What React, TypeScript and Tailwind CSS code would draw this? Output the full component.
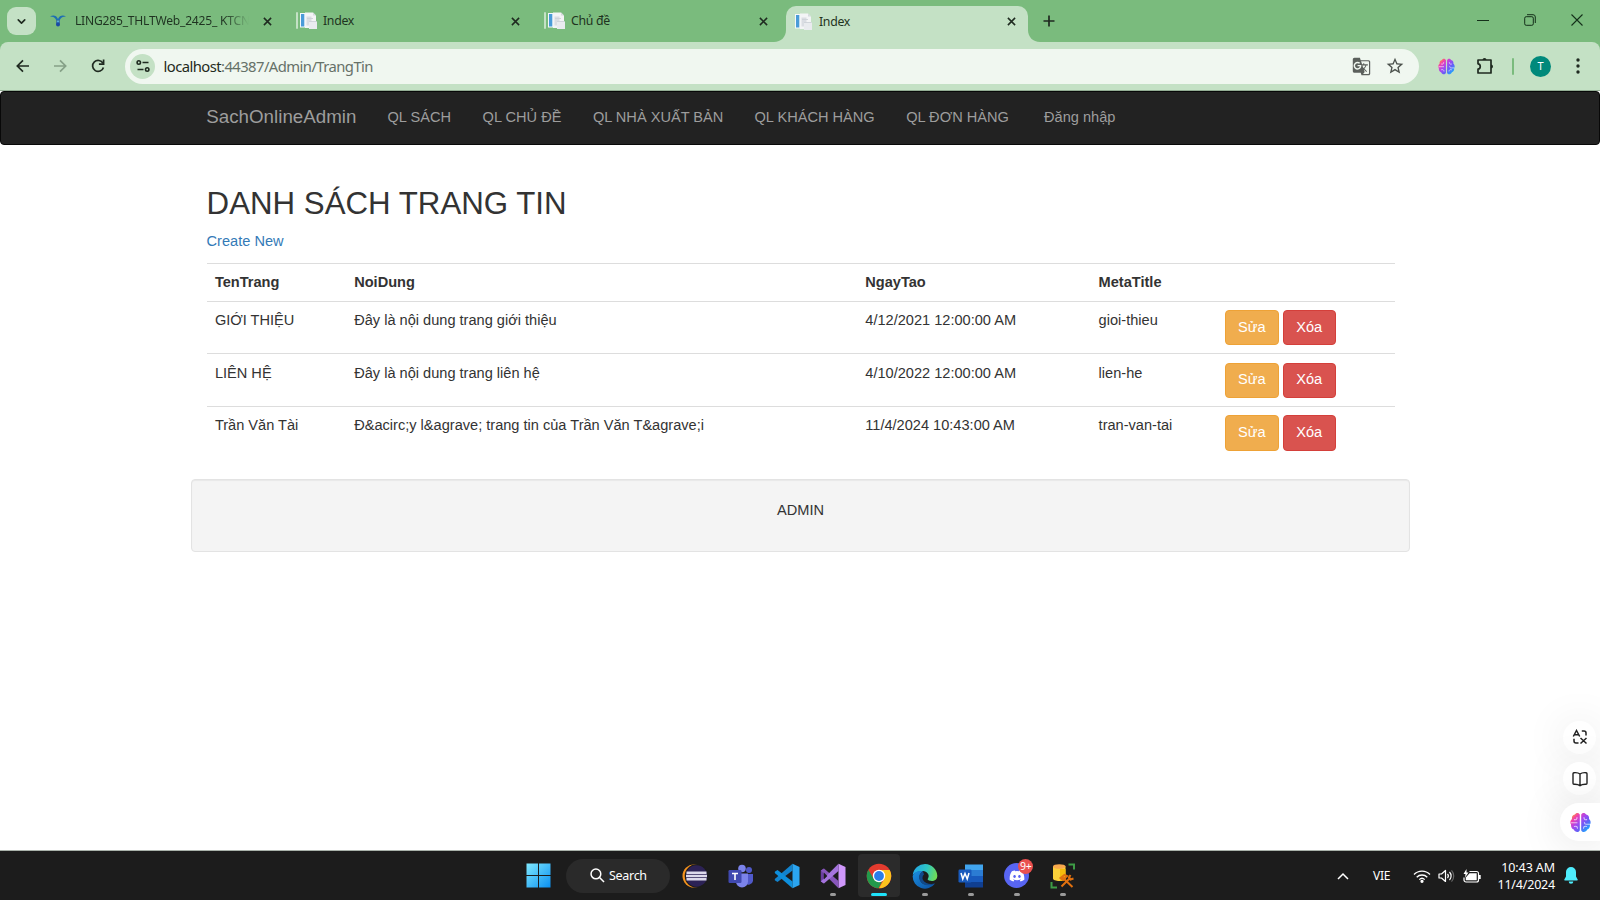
import React from "react";
import { ChevronDown } from "lucide-react";
import { FaDiscord } from "react-icons/fa";
import { MdGTranslate, MdStarOutline } from "react-icons/md";

type IconProps = { className?: string };

/* ---------- browser icons ---------- */

const CloseIcon = ({ className = "" }: IconProps) => (
  <svg viewBox="0 0 10 10" className={`h-[9px] w-[9px] ${className}`}>
    <path d="M1 1l8 8M9 1L1 9" stroke="#1f2a20" strokeWidth="1.7" fill="none" />
  </svg>
);

const PageIcon = () => (
  <svg viewBox="0 0 17 17" className="h-[17px] w-[17px] shrink-0">
    <path d="M0 1h6v14.500H0z" fill="#f4f8fb" />
    <path d="M1 2h3.300v12.500H1z" fill="#4a9bd8" />
    <path d="M5 .5h8l3 3V16H5z" fill="#f3f4f6" />
    <path d="M13 .5l3 3h-3z" fill="#d5d9de" />
    <path d="M6.500 4.500h5v9h-5z" fill="#dadde3" />
    <path d="M9 9.500h8V17H9z" fill="#e9ebef" />
    <path d="M9 9.500h7.500M7 6.500h6" stroke="#cdd1d8" strokeWidth=".9" />
  </svg>
);

const SchoolIcon = () => (
  <svg viewBox="0 0 16 12" className="h-[12px] w-[16px] shrink-0">
    <path d="M0 1.500C3-.3 6.500.3 8 4 9.500.3 13-.3 16 1.500 13 1.500 10.800 2.500 9.800 5H6.200C5.200 2.500 3 1.500 0 1.500z" fill="#1f6fb2" />
    <path d="M6.200 5C7 6.500 6 8 6 9.500a2 2 0 0 0 4 0C10 8 9 6.500 9.800 5L8 5.500z" fill="#1a4aa5" />
    <circle cx="8" cy="6.500" r="1" fill="#5cb6e4" />
  </svg>
);

const Brain = ({ className = "" }: IconProps) => (
  <svg viewBox="0 0 24 24" className={className}>
    <defs>
      <linearGradient id="brainGrad" gradientUnits="userSpaceOnUse" x1="3" y1="2" x2="22" y2="21">
        <stop offset="0" stopColor="#ff9a2e" />
        <stop offset=".2" stopColor="#f03fb0" />
        <stop offset=".45" stopColor="#a348f0" />
        <stop offset=".68" stopColor="#6460f6" />
        <stop offset="1" stopColor="#12b5ff" />
      </linearGradient>
    </defs>
    <path
      fill="url(#brainGrad)"
      d="M11.200 3.200C10.500.5 6.800.2 5.500 2.800 3 3.300 1.800 5.500 2.300 8 .2 9.300-.1 12.700 1.200 14.300.9 17 2.200 19.300 4.300 20 5.300 23.300 10.400 24 11.200 20.800zM12.800 3.200C13.500.5 17.200.2 18.500 2.800 21 3.300 22.200 5.500 21.700 8c2.100 1.300 2.400 4.700 1.100 6.300.3 2.700-1 5-3.100 5.700-1 3.300-6.100 4-6.900.8z"
    />
    <path
      d="M8 6.500c0 2-1.500 2.700-3 2.200M1.500 12.300h6.500M5 16.500c2-.5 3.500.3 3.500 2M16 6.500c0 2 1.500 2.700 3 2.200M22.500 14h-4c-1.500 0-2-1-2-2M19 16.500c-2-.5-3.500.3-3.500 2"
      stroke="#fff"
      strokeOpacity=".65"
      strokeWidth="1.300"
      fill="none"
      strokeLinecap="round"
    />
  </svg>
);

/* ---------- tab strip ---------- */

const Tab = ({ icon, title, fade = false, divider = true }: { icon: React.ReactNode; title: string; fade?: boolean; divider?: boolean }) => (
  <div className="flex h-[41px] w-[248px] items-center">
    <div className={fade ? "flex w-[25px] shrink-0 items-center" : "flex w-[25px] shrink-0 items-center pl-[1.500px]"}>{icon}</div>
    <div
      className={
        fade
          ? "w-[174px] bg-gradient-to-r from-[#1f3321] from-85% to-[#7abb7d] bg-clip-text pt-[2px] text-[12.1px] tracking-[-0.22px] whitespace-nowrap text-transparent"
          : "w-[188px] pt-[2px] text-[12.300px] tracking-[-0.3px] whitespace-nowrap text-[#1f3321]"
      }
    >
      {title}
    </div>
    <CloseIcon className={fade ? "mt-[1px] ml-[13.500px]" : "mt-[1px] -ml-[0.500px]"} />
    {divider && <div className="ml-auto h-[17px] w-[2px] rounded bg-[#c4e1c5]" />}
  </div>
);

const TabStrip = () => (
  <div className="flex h-[42px] items-start bg-[#7abb7d]">
    <div className="mt-[7px] ml-[7px] flex h-[28px] w-[29px] items-center justify-center rounded-[9px] bg-[#c4e1c5]">
      <ChevronDown size={13} strokeWidth={3} color="#1f2a20" />
    </div>
    <div className="ml-[14px] flex">
      <div className="flex w-[248px]">
        <Tab icon={<SchoolIcon />} title="LING285_THLTWeb_2425_ KTCN" fade />
      </div>
      <div className="flex w-[248px]">
        <Tab icon={<PageIcon />} title="Index" />
      </div>
      <div className="flex w-[238px]">
        <Tab icon={<PageIcon />} title="Chủ đề" divider={false} />
      </div>
    </div>
    <div className="-ml-[10px] flex h-[42px] items-end">
      <svg viewBox="0 0 12 12" className="h-[12px] w-[12px]"><path d="M12 0v12H0C7 12 12 7 12 0z" fill="#c4e1c5" /></svg>
      <div className="flex h-[36px] w-[242px] items-center rounded-t-[10px] bg-[#c4e1c5] pb-[8px] pl-[8px]">
        <div className="w-[25px] pl-[0.500px] pt-[3px]"><PageIcon /></div>
        <div className="w-[187.500px] pt-[5px] text-[12.300px] tracking-[-0.3px] text-[#1f3321]">Index</div>
        <CloseIcon className="mt-[3px]" />
      </div>
      <svg viewBox="0 0 12 12" className="h-[12px] w-[12px]"><path d="M0 0v12h12C5 12 0 7 0 0z" fill="#c4e1c5" /></svg>
    </div>
    <svg viewBox="0 0 12 12" className="mt-[15px] ml-[3px] h-[12px] w-[12px]">
      <path d="M6 .5v11M.5 6h11" stroke="#1f2a20" strokeWidth="1.700" />
    </svg>
    <div className="mt-[14px] ml-auto mr-[17.500px] flex items-center gap-[35px]">
      <svg viewBox="0 0 12 12" className="h-[12px] w-[12px]"><path d="M0 6.500h12" stroke="#14301a" strokeWidth="1" /></svg>
      <svg viewBox="0 0 12 12" className="h-[12px] w-[12px]">
        <rect x=".7" y="2.700" width="8.600" height="8.600" rx="1.500" fill="none" stroke="#14301a" />
        <path d="M3 .7h6a2.300 2.300 0 0 1 2.300 2.300v6" fill="none" stroke="#14301a" />
      </svg>
      <svg viewBox="0 0 12 12" className="h-[12px] w-[12px]"><path d="M.5.5l11 11M11.500.5l-11 11" stroke="#14301a" strokeWidth="1.100" /></svg>
    </div>
  </div>
);

/* ---------- toolbar ---------- */

const Toolbar = () => (
  <div className="bg-[#7abb7d]">
    <div className="flex h-[49px] items-center rounded-t-[8px] border-b border-[#93ad94] bg-[#c4e1c5]">
      <svg viewBox="0 0 16 16" className="ml-[15px] h-[16px] w-[16px]">
        <path d="M14 8H2.500M8 2.300L2.300 8 8 13.700" fill="none" stroke="#1f2a20" strokeWidth="1.700" />
      </svg>
      <svg viewBox="0 0 16 16" className="ml-[21px] h-[16px] w-[16px]">
        <path d="M2 8h11.500M8 2.300L13.700 8 8 13.700" fill="none" stroke="#85a087" strokeWidth="1.700" />
      </svg>
      <svg viewBox="0 0 16 16" className="ml-[22px] h-[16px] w-[16px]">
        <path d="M13 5.400A5.500 5.500 0 1 0 13.400 9.400" fill="none" stroke="#1f2a20" strokeWidth="1.700" />
        <path d="M13.600 1.500v4.700H8.900" fill="none" stroke="#1f2a20" strokeWidth="1.700" />
      </svg>
      <div className="ml-[19px] flex h-[35px] w-[1294px] items-center rounded-full bg-[#f0f7f0] pr-[14px] pl-[5px]">
        <div className="flex h-[25px] w-[25px] items-center justify-center rounded-full bg-[#c4e1c5]">
          <svg viewBox="0 0 14 14" className="h-[14px] w-[14px]" fill="none" stroke="#1f2a20" strokeWidth="1.600">
            <circle cx="2.800" cy="3.500" r="1.700" />
            <path d="M6.500 3.500h6M1.500 10.500h6" />
            <circle cx="11.200" cy="10.500" r="1.700" />
          </svg>
        </div>
        <div className="ml-[8.500px] text-[14.800px] tracking-[-0.56px] text-[#667168]">
          <span className="text-[#1f2a20]">localhost</span>:44387/Admin/TrangTin
        </div>
        <div className="ml-auto flex items-center gap-[14.500px]">
          <MdGTranslate size={19} color="#5b605c" />
          <MdStarOutline size={20} color="#4c524d" />
        </div>
      </div>
      <Brain className="ml-[19px] h-[17px] w-[17px]" />
      <svg viewBox="0 0 18 18" className="ml-[21px] h-[18px] w-[18px]" fill="none">
        <path d="M2 3h13v13H2v-3.800c3-.3 3-5.100 0-5.400z" stroke="#1f2a20" strokeWidth="1.700" strokeLinejoin="round" />
        <path d="M6.500 3a2 2 0 0 1 4 0zM15 7.500a2 2 0 0 1 0 4z" fill="#1f2a20" />
      </svg>
      <div className="ml-[18px] h-[17px] w-[2px] rounded bg-[#7abb7d]" />
      <div className="ml-[16px] flex h-[21px] w-[21px] items-center justify-center rounded-full bg-[#00897b] text-[11px] text-white">T</div>
      <svg viewBox="0 0 4 16" className="ml-[25px] h-[16px] w-[4px]" fill="#1f2a20">
        <circle cx="2" cy="2" r="1.700" /><circle cx="2" cy="8" r="1.700" /><circle cx="2" cy="14" r="1.700" />
      </svg>
    </div>
  </div>
);

/* ---------- page ---------- */

const navItems = [
  { label: "QL SÁCH", box: "w-[95.1px]" },
  { label: "QL CHỦ ĐỀ", box: "w-[110.3px]" },
  { label: "QL NHÀ XUẤT BẢN", box: "w-[161.6px]" },
  { label: "QL KHÁCH HÀNG", box: "w-[151.700px]" },
  { label: "QL ĐƠN HÀNG", box: "w-[137.900px]" },
  { label: "Đăng nhập", box: "w-[110px]" },
];

const rows = [
  ["GIỚI THIỆU", "Đây là nội dung trang giới thiệu", "4/12/2021 12:00:00 AM", "gioi-thieu"],
  ["LIÊN HỆ", "Đây là nội dung trang liên hệ", "4/10/2022 12:00:00 AM", "lien-he"],
  ["Trần Văn Tài", "Đ&acirc;y l&agrave; trang tin của Trần Văn T&agrave;i", "11/4/2024 10:43:00 AM", "tran-van-tai"],
];

const gridCols = "grid grid-cols-[139.3px_511.1px_233.3px_126.2px_1fr]";

const AdminPage = () => (
  <div className="flex-1 bg-white font-['Liberation_Sans',Arial,sans-serif] text-[14.58px] leading-[20.8px] text-[#333]">
    <nav className="flex h-[54px] items-center rounded-[4px] border border-[#080808] bg-[#222] pb-[1px] pl-[205.300px] text-[#9d9d9d]">
      <div className="w-[181.200px] text-[18.75px] whitespace-nowrap">SachOnlineAdmin</div>
      {navItems.map((n) => (
        <div key={n.label} className={`${n.box} whitespace-nowrap`}>{n.label}</div>
      ))}
    </nav>
    <main className="ml-[206.600px] w-[1188px] pt-[41.6px]">
      <h2 className="text-[31.25px] leading-[34.4px]">DANH SÁCH TRANG TIN</h2>
      <p className="mt-[10.4px] text-[#337ab7]">Create New</p>
      <div className="mt-[10.4px]">
        <div className={`${gridCols} h-[38.200px] border-t border-[#ddd] pt-[8px] font-bold`}>
          {["TenTrang", "NoiDung", "NgayTao", "MetaTitle"].map((h) => (
            <div key={h} className="pl-[8.3px]">{h}</div>
          ))}
        </div>
        {rows.map((r) => (
          <div key={r[0]} className={`${gridCols} h-[52.600px] border-t border-[#ddd] pt-[8.3px]`}>
            {r.map((c) => (
              <div key={c} className="pl-[8.3px] whitespace-nowrap">{c}</div>
            ))}
            <div className="flex gap-[4px] pl-[8.3px] text-white">
              <div className="flex h-[35.4px] w-[54px] items-center justify-center rounded-[4px] border border-[#eea236] bg-[#f0ad4e] pb-[1px]">Sửa</div>
              <div className="flex h-[35.4px] w-[53px] items-center justify-center rounded-[4px] border border-[#d43f3a] bg-[#d9534f] pb-[1px]">Xóa</div>
            </div>
          </div>
        ))}
      </div>
    </main>
    <footer className="ml-[191px] mt-[20.500px] h-[72.500px] w-[1219px] rounded-[4px] border border-[#e3e3e3] bg-[#f4f4f4] pt-[20px] text-center shadow-[inset_0_1px_1px_rgba(0,0,0,0.05)]">
      ADMIN
    </footer>
  </div>
);

/* ---------- floating assistant ---------- */

const Assistant = () => (
  <div className="absolute right-0 bottom-[50px] flex h-[260px] w-[180px] flex-col items-end overflow-hidden pt-[130.500px]">
    <div className="mr-[4px] flex h-[33px] w-[33px] shrink-0 items-center justify-center rounded-full bg-white shadow-[0_2px_44px_rgba(0,0,0,0.11)]">
      <svg viewBox="0 0 16 16" className="h-[16px] w-[16px]" fill="none" stroke="#222" strokeWidth="1.500">
        <path d="M1.300 7.500L4.500 1.500l3.200 6M2.300 5.700h4.400M9.800 2h2.200a2 2 0 0 1 2 2v2.500M6.500 14H4a2 2 0 0 1-2-2V9.800M8.500 9l6 5.500M14.500 9l-6 5.500" />
      </svg>
    </div>
    <div className="mt-[8.500px] mr-[4px] flex h-[33px] w-[33px] shrink-0 items-center justify-center rounded-full bg-white shadow-[0_2px_44px_rgba(0,0,0,0.11)]">
      <svg viewBox="0 0 16 16" className="h-[16px] w-[16px]" fill="none" stroke="#222" strokeWidth="1.400" strokeLinejoin="round">
        <path d="M8 3C6.500 1.800 4 1.500 2 1.700Q1 1.800 1 2.700V12.300q0 1 1 1C4 13.200 6.500 13.500 8 14.700 9.500 13.500 12 13.200 14 13.300q1 0 1-1V2.700q0-.9-1-1C12 1.500 9.500 1.800 8 3zV14.500" />
      </svg>
    </div>
    <div className="mt-[8px] flex h-[38px] w-[40px] shrink-0 items-center rounded-l-full bg-white pl-[10px] shadow-[0_2px_44px_rgba(0,0,0,0.13)]">
      <Brain className="h-[21px] w-[21px] shrink-0" />
    </div>
  </div>
);

/* ---------- taskbar ---------- */

const Eclipse = () => (
  <svg viewBox="0 0 26 26" className="h-[26px] w-[26px]">
    <circle cx="12" cy="13" r="11.500" fill="#f7941e" />
    <circle cx="14.500" cy="13" r="11.800" fill="#1c1c1c" />
    <circle cx="14.500" cy="13" r="10.700" fill="#2c2255" />
    <path d="M4.500 9.700h20M4 13h21M4.500 16.300h20" stroke="#dcd9ea" strokeWidth="2.500" />
  </svg>
);
const Teams = () => (
  <svg viewBox="0 0 26 26" className="h-[26px] w-[26px]">
    <circle cx="21" cy="7" r="3" fill="#5059c9" /><path d="M17 11h8v7a4.500 4.500 0 0 1-8 2z" fill="#5059c9" />
    <circle cx="14" cy="5.500" r="3.800" fill="#7b83eb" /><path d="M8 10.500h12v8a6 6 0 0 1-12 0z" fill="#7b83eb" />
    <rect x=".5" y="7" width="13" height="13" rx="1.200" fill="#4049b0" />
    <path d="M4 10.500h6M7 10.500v6.500" stroke="#fff" strokeWidth="1.600" />
  </svg>
);
const VSCode = () => (
  <svg viewBox="0 0 26 26" className="h-[26px] w-[26px]">
    <path d="M18.500 7.500L3.500 19 .8 17.200V16L18.500.7z" fill="#1283cd" />
    <path d="M18.500 18.500L3.500 7 .8 8.800V10l17.700 15.300z" fill="#0e8fdc" />
    <path d="M18.500.7L25.500 4v18l-7 3.300z" fill="#2ba5f0" />
  </svg>
);
const VStudio = () => (
  <svg viewBox="0 0 26 26" className="h-[26px] w-[26px]">
    <path d="M18.500.7L25.500 4v18l-7 3.300z" fill="#cf97fb" />
    <path d="M4 5.500L.8 7.500v11L4 20.500z" fill="#6b3fa0" />
    <path d="M.8 7.500L4 5.500 18.500 18v7.300z" fill="#8856bb" />
    <path d="M18.500.7V8L4 20.500.8 18.500z" fill="#a574dd" />
    <path d="M3.800 9.500v7L7.300 13z" fill="#1c1c1c" />
  </svg>
);
const Chrome = () => (
  <svg viewBox="0 0 26 26" className="h-[26px] w-[26px]">
    <circle cx="13" cy="13" r="12.300" fill="#e33b2e" />
    <path d="M13 7h10.700A12.300 12.300 0 0 1 13 25.300L18.200 16z" fill="#fcc31e" />
    <path d="M2.400 6.800L7.800 16 13 19l3-.7L12.500 25.300A12.300 12.300 0 0 1 2.400 6.800z" fill="#229a4b" />
    <circle cx="13" cy="13" r="6.200" fill="#fff" /><circle cx="13" cy="13" r="4.900" fill="#2b7de9" />
  </svg>
);
const Edge = () => (
  <svg viewBox="0 0 26 26" className="h-[26px] w-[26px]">
    <defs>
      <linearGradient id="edgeTop" x1="0" y1=".3" x2="1" y2=".5"><stop offset="0" stopColor="#21a5e8" /><stop offset=".55" stopColor="#2ec6c2" /><stop offset="1" stopColor="#70dd55" /></linearGradient>
      <linearGradient id="edgeLow" x1="0" y1="0" x2="1" y2="1"><stop offset="0" stopColor="#1a8fe0" /><stop offset="1" stopColor="#0c4fa0" /></linearGradient>
    </defs>
    <path d="M.8 12A12.300 12.300 0 0 1 25.300 12.500C25.500 17 21.500 18.500 18 17.800c-2.500-.5-2.800-1.500-1.800-2.800C18 12 15 8 11 8 6 8 2.500 10 .8 12z" fill="url(#edgeTop)" />
    <path d="M.7 13C2 9 7 7 11 8.500 7.500 10 6.500 14 8.500 18c2 4 8 5 14.500 2.500A12.300 12.300 0 0 1 .7 13z" fill="url(#edgeLow)" />
    <path d="M11 8.500C7 10 6 14.500 8.500 18.500 11 22.500 17 23.500 23 20.500 19 21.500 13 21 11 17c-1-2-.5-4.500 1-5.500z" fill="#114a8b" />
  </svg>
);
const Word = () => (
  <svg viewBox="0 0 26 26" className="h-[26px] w-[26px]">
    <path d="M7 1.500h18V8H7z" fill="#41a5ee" /><path d="M7 7h18v6H7z" fill="#2b7cd3" />
    <path d="M7 13h18v6H7z" fill="#185abd" /><path d="M7 19h18v5.500H7z" fill="#103f91" />
    <rect x=".5" y="6.500" width="13" height="13" rx="1.200" fill="#185abd" />
    <path d="M3 10l1.800 6L7 10.500 9.200 16 11 10" fill="none" stroke="#fff" strokeWidth="1.500" />
  </svg>
);
const Discord = () => (
  <div className="relative flex h-[25px] w-[25px] items-center justify-center rounded-full bg-[#5865f2]">
    <FaDiscord size={16} color="#fff" />
    <div className="absolute -top-[4px] -right-[4px] flex h-[15px] w-[15px] items-center justify-center rounded-full bg-[#e9504f] text-[10.500px] tracking-[-0.3px] text-white">9+</div>
  </div>
);
const Ssms = () => (
  <svg viewBox="0 0 26 26" className="h-[26px] w-[26px]">
    <path d="M18.500 1.500h5.500v5M1.500 19v5.500H7" fill="none" stroke="#3d9b45" strokeWidth="2" />
    <path d="M3 3.500v12c0 1.500 3 2.500 6.300 2.500s6.200-1 6.200-2.500v-12z" fill="#fbd13a" />
    <path d="M10 6h5.500v9.500c0 1.300-2.500 2.300-5.500 2.500z" fill="#f5bc0c" />
    <ellipse cx="9.250" cy="3.500" rx="6.250" ry="2.300" fill="#f9a94c" />
    <path d="M11.500 23.500l9-9M12.500 14.500l10 9.500M10.500 15l4-3 2.500 1-4 4zM20.500 12l-1.500 2.500 1.500 2 3-1" fill="none" stroke="#e0700f" strokeWidth="2" />
  </svg>
);

const apps = [
  { id: "eclipse", icon: <Eclipse />, open: false, active: false },
  { id: "teams", icon: <Teams />, open: false, active: false },
  { id: "vscode", icon: <VSCode />, open: false, active: false },
  { id: "vs", icon: <VStudio />, open: true, active: false },
  { id: "chrome", icon: <Chrome />, open: true, active: true },
  { id: "edge", icon: <Edge />, open: true, active: false },
  { id: "word", icon: <Word />, open: true, active: false },
  { id: "discord", icon: <Discord />, open: true, active: false },
  { id: "ssms", icon: <Ssms />, open: true, active: false },
];

const Taskbar = () => (
  <div className="flex h-[50px] shrink-0 items-center border-t border-[#a9b2aa] bg-[#1c1c1c] text-white">
    <svg viewBox="0 0 25 25" className="ml-[525.500px] h-[25px] w-[25px]">
      <defs>
        <linearGradient id="winGrad" x1="0" y1="0" x2="1" y2="1"><stop offset="0" stopColor="#7fe9ff" /><stop offset="1" stopColor="#0a8ff0" /></linearGradient>
      </defs>
      <path d="M.5.500h11.500v11.500H.5zM13 .5h11.500v11.500H13zM.5 13h11.500v11.500H.5zM13 13h11.500v11.500H13z" fill="url(#winGrad)" />
    </svg>
    <div className="ml-[15px] flex h-[34px] w-[104px] items-center rounded-full bg-[#2a2a2a] pl-[24px]">
      <svg viewBox="0 0 16 16" className="h-[15px] w-[15px]" fill="none" stroke="#fff" strokeWidth="1.600">
        <circle cx="6.300" cy="6.300" r="5.200" /><path d="M10.200 10.200L15 15" />
      </svg>
      <span className="ml-[4.500px] pt-[2px] text-[12.5px] tracking-[-0.3px]">Search</span>
    </div>
    <div className="ml-[3px] flex">
      {apps.map((a) => (
        <div key={a.id} className="flex h-[43px] w-[45.9px] justify-center">
          <div className={`flex w-[42px] flex-col items-center rounded-[4px] pt-[8.500px] ${a.active ? "bg-[#2b2b2b]" : ""}`}>
            <div className="flex h-[26px] items-center">{a.icon}</div>
            {a.open && (
              <div className={a.active ? "mt-[4px] h-[3px] w-[16px] rounded-full bg-[#1fe3fb]" : "mt-[4px] h-[3px] w-[6px] rounded-full bg-[#9a9a9a]"} />
            )}
          </div>
        </div>
      ))}
    </div>
    <div className="mr-[22px] ml-auto flex items-center">
      <svg viewBox="0 0 12 8" className="h-[8px] w-[12px]"><path d="M1 7l5-5 5 5" fill="none" stroke="#fff" strokeWidth="1.500" /></svg>
      <span className="ml-[24px] w-[19px] pt-[1px] text-[12px] tracking-[-0.3px]">VIE</span>
      <svg viewBox="0 0 18 14" className="ml-[21px] h-[14px] w-[18px]" fill="none" stroke="#fff" strokeWidth="1.300">
        <path d="M1 5.500a11.300 11.300 0 0 1 16 0M3.700 8.200a7.500 7.500 0 0 1 10.600 0M6.300 10.600a3.900 3.900 0 0 1 5.400 0" />
        <circle cx="9" cy="12.300" r="1" fill="#fff" />
      </svg>
      <svg viewBox="0 0 17 14" className="ml-[7px] h-[14px] w-[17px]" fill="none" stroke="#fff" strokeWidth="1.200">
        <path d="M1 5h2.500L7.500 1.500v11L3.500 9H1z" strokeLinejoin="round" /><path d="M9.500 5a3 3 0 0 1 0 4M11.500 3a5.800 5.800 0 0 1 0 8" /><path d="M13.500 1.300a8.400 8.400 0 0 1 0 11.400" stroke="#666" />
      </svg>
      <svg viewBox="0 0 18 14" className="ml-[8px] h-[14px] w-[18px]" fill="none" stroke="#fff" strokeWidth="1.200">
        <path d="M6.500 2.500h7a2 2 0 0 1 2 2V11a2 2 0 0 1-2 2H3a2 2 0 0 1-2-2V8.500" />
        <path d="M6.500 4.300h7.200v7H2.800V8.500z" fill="#fff" stroke="none" /><path d="M16.800 6v4" strokeWidth="1.800" />
        <path d="M3.500 0L.5 5h2L2 8.500 5.500 3.500h-2z" fill="#fff" stroke="none" />
      </svg>
      <div className="ml-[14px] flex w-[60px] flex-col items-end text-[12.5px] leading-[17px] tracking-[-0.2px] whitespace-nowrap">
        <div className="tracking-[-0.1px]">10:43 AM</div>
        <div>11/4/2024</div>
      </div>
      <svg viewBox="0 0 14 17" className="ml-[9px] h-[17px] w-[14px]" fill="#4fedfd">
        <path d="M7 0a5 5 0 0 1 5 5v4.500l1.700 3q.3 1-.7 1H1q-1 0-.7-1l1.700-3V5a5 5 0 0 1 5-5zM4.700 14.500h4.600a2.300 2.300 0 0 1-4.600 0z" />
      </svg>
    </div>
  </div>
);

export default function App() {
  return (
    <div className="relative flex h-[900px] w-[1600px] flex-col overflow-hidden bg-white font-['Noto_Sans','Open_Sans',sans-serif]">
      <TabStrip />
      <Toolbar />
      <AdminPage />
      <Taskbar />
      <Assistant />
    </div>
  );
}
